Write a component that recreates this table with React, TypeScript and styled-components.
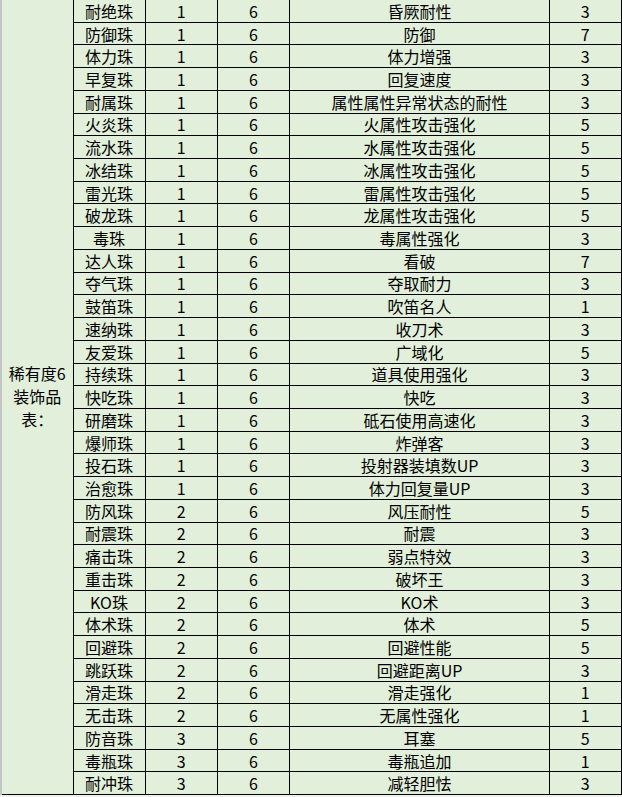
import React from 'react';
import styled, { createGlobalStyle } from 'styled-components';

const GlobalStyle = createGlobalStyle`
	html, body {
		margin: 0;
		padding: 0;
		background: #eef0f2;
	}
	body {
		font-family: 'Noto Sans CJK SC', 'Noto Sans', sans-serif;
		overflow: hidden;
	}
`;

const Sheet = styled.table`
	border-collapse: collapse;
	table-layout: fixed;
	width: 620px;
	margin-top: -1px;
	background: #e2efda;
	font-size: 16px;
	color: #000;
`;

const Column = styled.col<{ $w: number }>`
	width: ${(p) => p.$w}px;
`;

const Cell = styled.td`
	height: 21.72px;
	padding: 0;
	border: 1px solid #000;
	text-align: center;
	vertical-align: middle;
	line-height: 20px;
	white-space: nowrap;
	overflow: hidden;
`;

const TitleCell = styled.td`
	padding: 0 6px;
	border: 1px solid #000;
	border-left: 2px solid #c4c4c4;
	border-top: none;
	text-align: center;
	vertical-align: middle;
	line-height: 23px;
	word-break: break-all;
`;

type Gem = [string, number, number, string, number];

const widths = [72, 72, 72.5, 72, 260, 71.5];

const gems: Gem[] = [
	['耐绝珠', 1, 6, '昏厥耐性', 3],
	['防御珠', 1, 6, '防御', 7],
	['体力珠', 1, 6, '体力增强', 3],
	['早复珠', 1, 6, '回复速度', 3],
	['耐属珠', 1, 6, '属性属性异常状态的耐性', 3],
	['火炎珠', 1, 6, '火属性攻击强化', 5],
	['流水珠', 1, 6, '水属性攻击强化', 5],
	['冰结珠', 1, 6, '冰属性攻击强化', 5],
	['雷光珠', 1, 6, '雷属性攻击强化', 5],
	['破龙珠', 1, 6, '龙属性攻击强化', 5],
	['毒珠', 1, 6, '毒属性强化', 3],
	['达人珠', 1, 6, '看破', 7],
	['夺气珠', 1, 6, '夺取耐力', 3],
	['鼓笛珠', 1, 6, '吹笛名人', 1],
	['速纳珠', 1, 6, '收刀术', 3],
	['友爱珠', 1, 6, '广域化', 5],
	['持续珠', 1, 6, '道具使用强化', 3],
	['快吃珠', 1, 6, '快吃', 3],
	['研磨珠', 1, 6, '砥石使用高速化', 3],
	['爆师珠', 1, 6, '炸弹客', 3],
	['投石珠', 1, 6, '投射器装填数UP', 3],
	['治愈珠', 1, 6, '体力回复量UP', 3],
	['防风珠', 2, 6, '风压耐性', 5],
	['耐震珠', 2, 6, '耐震', 3],
	['痛击珠', 2, 6, '弱点特效', 3],
	['重击珠', 2, 6, '破坏王', 3],
	['KO珠', 2, 6, 'KO术', 3],
	['体术珠', 2, 6, '体术', 5],
	['回避珠', 2, 6, '回避性能', 5],
	['跳跃珠', 2, 6, '回避距离UP', 3],
	['滑走珠', 2, 6, '滑走强化', 1],
	['无击珠', 2, 6, '无属性强化', 1],
	['防音珠', 3, 6, '耳塞', 5],
	['毒瓶珠', 3, 6, '毒瓶追加', 1],
	['耐冲珠', 3, 6, '减轻胆怯', 3],
];

export default function App() {
	return (
		<>
			<GlobalStyle />
			<Sheet>
				<colgroup>
					{widths.map((w, i) => (
						<Column key={i} $w={w} />
					))}
				</colgroup>
				<tbody>
					{gems.map(([name, slot, rarity, skill, level], i) => (
						<tr key={name}>
							{i === 0 && <TitleCell rowSpan={gems.length}>稀有度6装饰品表：</TitleCell>}
							<Cell>{name}</Cell>
							<Cell>{slot}</Cell>
							<Cell>{rarity}</Cell>
							<Cell>{skill}</Cell>
							<Cell>{level}</Cell>
						</tr>
					))}
				</tbody>
			</Sheet>
		</>
	);
}
